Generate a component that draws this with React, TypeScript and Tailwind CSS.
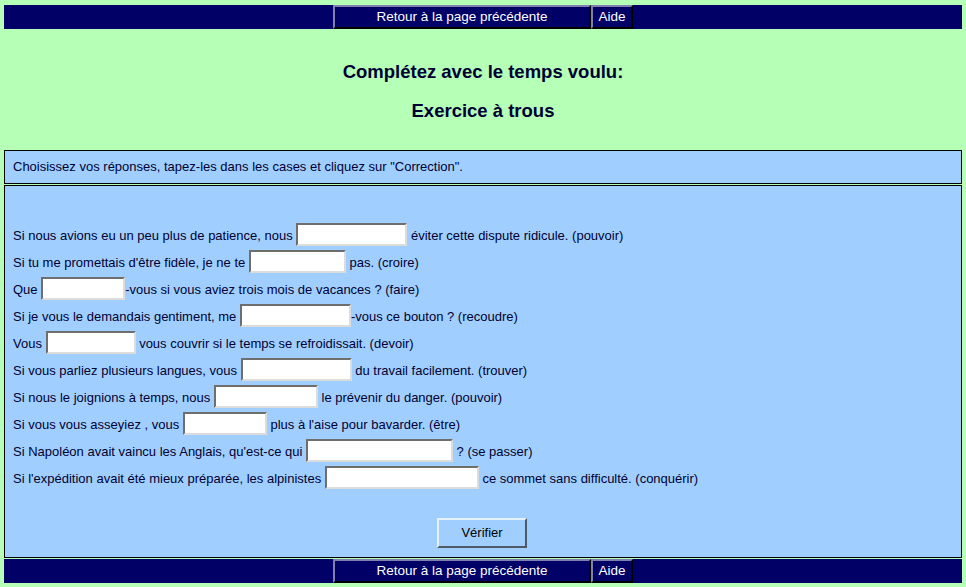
import React from "react";

type Row = { before: string; width: number; after: string };

const rows: Row[] = [
  { before: "Si nous avions eu un peu plus de patience, nous ", width: 111, after: " éviter cette dispute ridicule. (pouvoir)" },
  { before: "Si tu me promettais d'être fidèle, je ne te ", width: 97, after: " pas. (croire)" },
  { before: "Que ", width: 84, after: "-vous si vous aviez trois mois de vacances ? (faire)" },
  { before: "Si je vous le demandais gentiment, me ", width: 111, after: "-vous ce bouton ? (recoudre)" },
  { before: "Vous ", width: 90, after: " vous couvrir si le temps se refroidissait. (devoir)" },
  { before: "Si vous parliez plusieurs langues, vous ", width: 111, after: " du travail facilement. (trouver)" },
  { before: "Si nous le joignions à temps, nous ", width: 104, after: " le prévenir du danger. (pouvoir)" },
  { before: "Si vous vous asseyiez , vous ", width: 84, after: " plus à l'aise pour bavarder. (être)" },
  { before: "Si Napoléon avait vaincu les Anglais, qu'est-ce qui ", width: 147, after: " ? (se passer)" },
  { before: "Si l'expédition avait été mieux préparée, les alpinistes ", width: 154, after: " ce sommet sans difficulté. (conquérir)" },
];

function NavBar() {
  return (
    <div className="mx-[4px] h-[24px] bg-[#000066] flex justify-center text-[13.5px] text-white">
      <button className="w-[258px] h-full border-2 border-t-[#7f7fb0] border-l-[#7f7fb0] border-b-black border-r-black bg-[#000066] leading-[20px]">
        Retour à la page précédente
      </button>
      <button className="w-[42px] h-full border-2 border-t-[#7f7fb0] border-l-[#7f7fb0] border-b-black border-r-black bg-[#000066] leading-[20px]">
        Aide
      </button>
    </div>
  );
}

export default function App() {
  return (
    <div
      className="w-[966px] h-[587px] bg-[#b6ffb6] text-[#000033] overflow-hidden pt-[5px]"
      style={{ fontFamily: '"Liberation Sans", Arial, sans-serif' }}
    >
      <NavBar />

      {/* Titles */}
      <div className="h-[121px] flex flex-col items-center pt-[32px] gap-[17px]">
        <h2 className="text-[18.5px] font-bold leading-[22px]">Complétez avec le temps voulu:</h2>
        <h3 className="text-[18.5px] font-bold leading-[22px]">Exercice à trous</h3>
      </div>

      {/* Instructions */}
      <div className="mx-[4px] h-[34px] border border-black bg-[#a0cfff] px-[8px] flex items-center text-[13px]">
        Choisissez vos réponses, tapez-les dans les cases et cliquez sur "Correction".
      </div>

      {/* Exercise */}
      <div className="mx-[4px] mt-[1px] h-[373px] border border-black bg-[#a0cfff] px-[8px] pt-[35px] text-[13px]">
        {rows.map((r, i) => (
          <div key={i} className="h-[27px] flex items-center whitespace-pre">
            <span className="pt-[3px]">{r.before}</span>
            <input
              type="text"
              className="h-[23px] bg-white border-2 border-t-[#6e6e6e] border-l-[#6e6e6e] border-b-[#dcdcdc] border-r-[#dcdcdc] outline-none"
              style={{ width: r.width }}
            />
            <span className="pt-[3px]">{r.after}</span>
          </div>
        ))}
        <div className="flex justify-center mt-[27px] pr-[2px]">
          <button className="w-[90px] h-[30px] bg-[#a0cfff] border-2 border-t-[#e4f0ff] border-l-[#e4f0ff] border-b-[#505a66] border-r-[#505a66] text-[13px] text-black">
            Vérifier
          </button>
        </div>
      </div>

      <div className="mt-[1px]">
        <NavBar />
      </div>
    </div>
  );
}
